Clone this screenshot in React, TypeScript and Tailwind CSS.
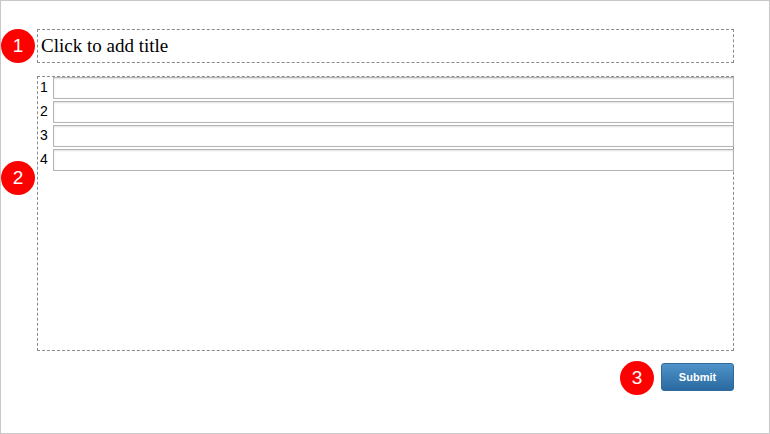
import React from "react"

function Badge({ n }: { n: number }) {
  return (
    <div className="flex h-[34px] w-[34px] shrink-0 items-center justify-center rounded-full bg-[#ff0000] text-[19px] text-white">
      {n}
    </div>
  )
}

export default function App() {
  const rows = [1, 2, 3, 4]

  return (
    <div className="flex h-[434px] w-[770px] flex-col overflow-hidden border border-[#c8c8c8] bg-white pt-[28px] [font-family:'Liberation_Sans',Arial,sans-serif]">
      {/* title */}
      <div className="flex items-start gap-[2px]">
        <Badge n={1} />
        <div className="flex h-[34px] w-[697px] items-center border border-dashed border-[#8a8a8a] pl-[3px] text-[19px] text-black [font-family:'Liberation_Serif','Times_New_Roman',serif]">
          Click to add title
        </div>
      </div>

      {/* list */}
      <div className="mt-[13px] flex items-start gap-[2px]">
        <div className="mt-[85px]">
          <Badge n={2} />
        </div>
        <div className="flex h-[275px] w-[697px] flex-col gap-[2px] border border-dashed border-[#8a8a8a]">
          {rows.map((r) => (
            <div key={r} className="-mr-px flex items-start">
              <span className="w-[15px] pl-[2px] pt-[1px] text-[14px] leading-[18px] text-black">{r}</span>
              <div className="h-[22px] flex-1 border border-[#b4b4b4] bg-white shadow-[inset_0_1px_2px_rgba(0,0,0,0.12)]" />
            </div>
          ))}
        </div>
      </div>

      {/* submit */}
      <div className="ml-[619px] mt-[10px] flex items-start gap-[7px]">
        <Badge n={3} />
        <button className="mt-[2px] h-[28px] w-[73px] rounded-[3px] border border-[#2f6a9c] bg-gradient-to-b from-[#4f93c9] to-[#2a6aa1] text-[11px] font-bold text-white">
          Submit
        </button>
      </div>
    </div>
  )
}
